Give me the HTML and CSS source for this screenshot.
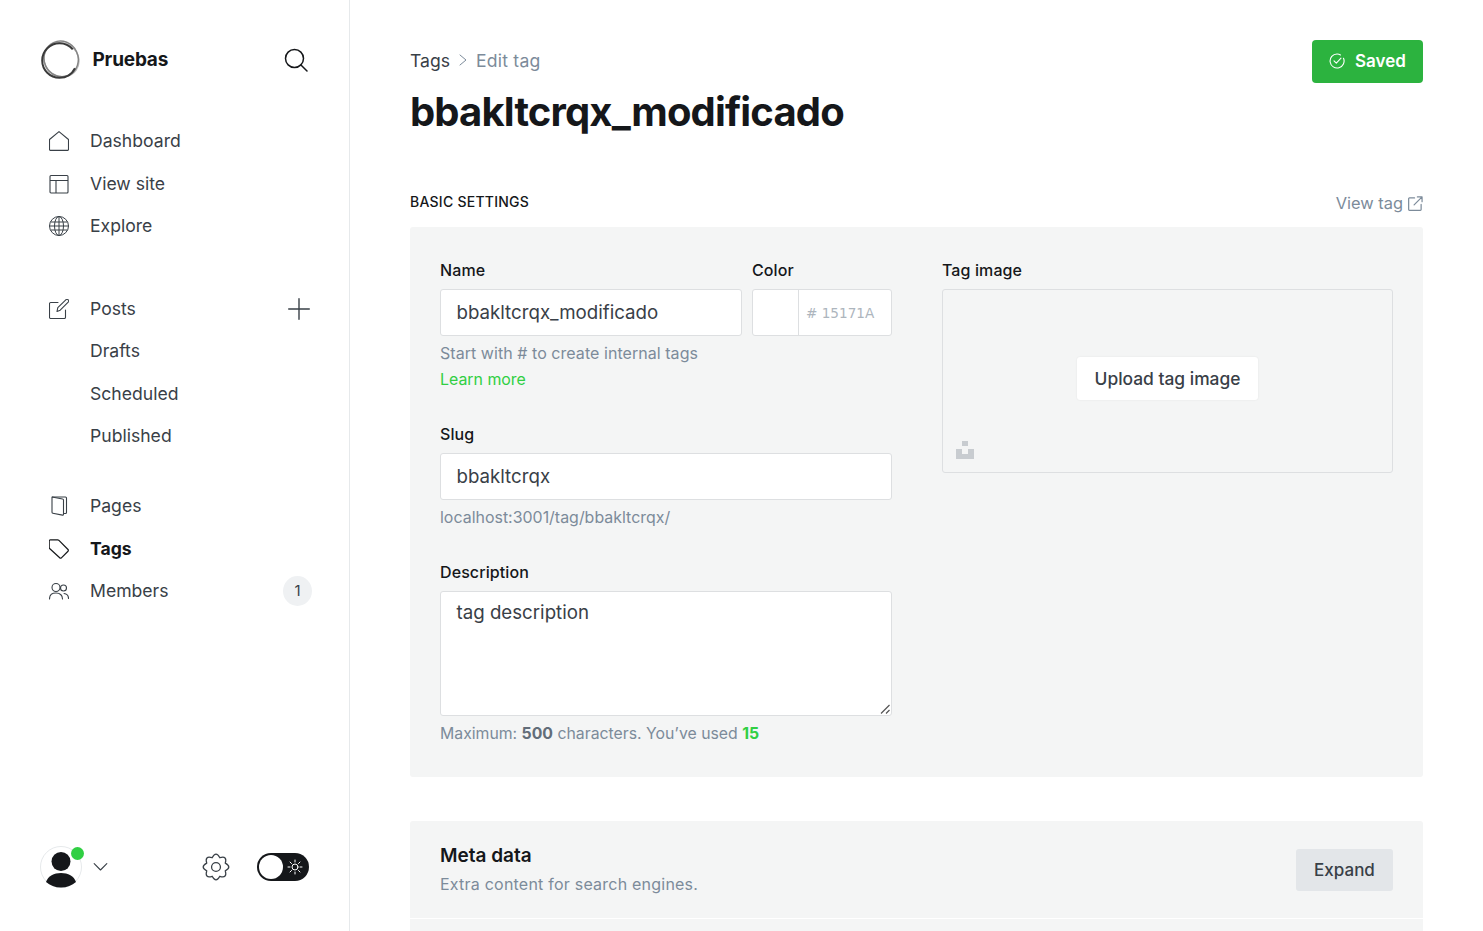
FILE: index.html
```html
<!DOCTYPE html>
<html lang="en">
<head>
    <meta charset="UTF-8">
    <meta name="viewport" content="width=device-width, initial-scale=1.0">
    <title>Tags - Edit tag</title>
    <link rel="stylesheet" href="styles.css">
</head>
<body>
    <div class="app">
        <aside class="sidebar">
            <div class="brand">
                <svg class="brand-logo" viewBox="0 0 40 40" fill="none">
                    <ellipse cx="21" cy="19" rx="18" ry="16.500" stroke="#bdbdbd" stroke-width="1.500" transform="rotate(35 20 20)"/>
                    <ellipse cx="21.500" cy="19.500" rx="17" ry="18" stroke="#858585" stroke-width="1.500" transform="rotate(-25 20 20)"/>
                    <circle cx="19.500" cy="20.500" r="17.300" stroke="#3a3a3a" stroke-width="2" stroke-dasharray="88 21" stroke-dashoffset="-8"/>
                </svg>
                <span class="brand-name">Pruebas</span>
                <svg class="brand-search" viewBox="0 0 24 24" fill="none" stroke="#15171a" stroke-width="1.500" stroke-linecap="round">
                    <circle cx="10.500" cy="10.500" r="9"/>
                    <path d="M17 17l6 6"/>
                </svg>
            </div>

            <ul class="nav nav-first">
                <li class="nav-item">
                    <svg class="nav-icon" viewBox="0 0 20 20" fill="none" stroke="#394047" stroke-width="1.100" stroke-linejoin="round"><path d="M.5 8.500L10 .6l9.500 7.900v9.700a1.200 1.200 0 01-1.200 1.200H1.700a1.200 1.200 0 01-1.200-1.200z"/></svg>
                    Dashboard
                </li>
                <li class="nav-item">
                    <svg class="nav-icon" viewBox="0 0 20 20" fill="none" stroke="#394047" stroke-width="1.100"><rect x="1" y="1.500" width="18" height="17.500" rx="1"/><path d="M1 6.500h18M7 6.500V19"/></svg>
                    View site
                </li>
                <li class="nav-item">
                    <svg class="nav-icon" viewBox="0 0 20 20" fill="none" stroke="#394047" stroke-width="1"><circle cx="10" cy="10" r="9.500"/><ellipse cx="10" cy="10" rx="4.500" ry="9.500"/><path d="M1.500 6h17M.5 10h19M1.500 14h17M10 .5v19"/></svg>
                    Explore
                </li>
            </ul>

            <ul class="nav nav-posts">
                <li class="nav-item">
                    <svg class="nav-icon" viewBox="0 0 20 20" fill="none" stroke="#394047" stroke-width="1.100" stroke-linejoin="round" stroke-linecap="round"><path d="M9 3.500H1.700A1.200 1.200 0 00.5 4.700v13.600a1.200 1.200 0 001.200 1.200h13.600a1.200 1.200 0 001.200-1.200V11"/><path d="M8 12.500l.8-3.800L16.800.8a1.600 1.600 0 012.400 2.400l-8 8z"/></svg>
                    Posts
                    <svg class="nav-plus" viewBox="0 0 22 22" fill="none" stroke="#394047" stroke-width="1.400" stroke-linecap="round"><path d="M11 .7v20.600M.7 11h20.600"/></svg>
                </li>
                <li class="nav-item">Drafts</li>
                <li class="nav-item">Scheduled</li>
                <li class="nav-item">Published</li>
            </ul>

            <ul class="nav nav-manage">
                <li class="nav-item">
                    <svg class="nav-icon" viewBox="0 0 20 20" fill="none" stroke="#394047" stroke-width="1.100" stroke-linejoin="round"><path d="M3 1h13.500a1 1 0 011 1v14.500a1 1 0 01-1 1H14.500"/><path d="M3 1l10.600 2a1 1 0 01.9 1v14.300a.8.8 0 01-1 .8L3.800 17.300a1 1 0 01-.8-1z"/></svg>
                    Pages
                </li>
                <li class="nav-item nav-item-active">
                    <svg class="nav-icon" viewBox="0 0 20 20" fill="none" stroke="#15171a" stroke-width="1.200" stroke-linejoin="round"><path d="M1.500.8h7.200a1.500 1.500 0 011 .4l9.300 9.300a1.200 1.200 0 010 1.700l-6.600 6.600a1.200 1.200 0 01-1.700 0L.6 9.500a1.500 1.500 0 01-.4-1V2a1.200 1.200 0 011.300-1.200z"/></svg>
                    Tags
                </li>
                <li class="nav-item">
                    <svg class="nav-icon" viewBox="0 0 20 20" fill="none" stroke="#394047" stroke-width="1.100" stroke-linecap="round"><circle cx="7" cy="6.500" r="4"/><path d="M.5 18c0-4 2.800-6 6.500-6s6.500 2 6.500 6"/><circle cx="14.500" cy="7" r="3"/><path d="M15 12.500c2.800.3 4.500 2 4.500 5"/></svg>
                    Members
                    <span class="nav-count">1</span>
                </li>
            </ul>

            <div class="sidebar-footer">
                <div class="avatar">
                    <svg class="avatar-pic" viewBox="0 0 42 42">
                        <circle cx="21" cy="21" r="20.500" fill="#fff" stroke="#e6e9eb"/>
                        <circle cx="21" cy="15.500" r="9.500" fill="#15171a"/>
                        <path d="M6 36c2-6 8-9 15-9s13 3 15 9c-4 3.500-9 5.500-15 5.500S10 39.500 6 36z" fill="#15171a"/>
                    </svg>
                    <span class="avatar-dot"></span>
                </div>
                <svg class="avatar-caret" viewBox="0 0 14 8" fill="none" stroke="#394047" stroke-width="1.100" stroke-linecap="round" stroke-linejoin="round"><path d="M.7.7L7 7l6.300-6.300"/></svg>
                <svg class="footer-gear" viewBox="0 0 24 24" fill="none" stroke="#394047" stroke-width="1.100" stroke-linejoin="round"><path d="M19.950 15.290Q21.900 21.900 15.290 19.950Q12 26 8.710 19.950Q2.100 21.900 4.050 15.290Q-2 12 4.050 8.710Q2.100 2.100 8.710 4.050Q12 -2 15.290 4.050Q21.900 2.100 19.950 8.710Q26 12 19.950 15.290z"/><circle cx="12" cy="12" r="3.800"/></svg>
                <div class="theme-toggle">
                    <span class="theme-knob"></span>
                    <svg class="theme-sun" viewBox="0 0 16 16" fill="none" stroke="#fff" stroke-width="1" stroke-linecap="round"><circle cx="8" cy="8" r="3"/><path d="M8 1v2M8 13v2M1 8h2M13 8h2M3 3l1.500 1.500M11.500 11.500L13 13M3 13l1.500-1.500M11.500 4.500L13 3"/></svg>
                </div>
            </div>
        </aside>

        <main class="content">
            <header class="page-head">
                <div>
                    <div class="crumbs">
                        <span class="crumb-link">Tags</span>
                        <svg class="crumb-arrow" viewBox="0 0 8 12" fill="none" stroke="#7c8b9a" stroke-width="1" stroke-linecap="round" stroke-linejoin="round"><path d="M1 1l6 5-6 5"/></svg>
                        <span class="crumb-current">Edit tag</span>
                    </div>
                    <h1>bbakltcrqx_modificado</h1>
                </div>
                <button class="btn-saved">
                    <svg viewBox="0 0 16 16" fill="none" stroke="#fff" stroke-width="1.100" stroke-linecap="round" stroke-linejoin="round"><path d="M14.500 5.200A7 7 0 118 1a7 7 0 013.500.9"/><path d="M5 7.800l2.300 2.400 4.700-5"/></svg>
                    Saved
                </button>
            </header>

            <div class="section-head">
                <h2>Basic settings</h2>
                <span class="view-tag">
                    View tag
                    <svg viewBox="0 0 16 16" fill="none" stroke="#7c8b9a" stroke-width="1.300" stroke-linecap="round" stroke-linejoin="round"><path d="M7 2H1.500a.8.8 0 00-.8.8v11.700a.8.8 0 00.8.8h11.700a.8.8 0 00.8-.8V9"/><path d="M6.500 9.500L15 1M10 1h5v5"/></svg>
                </span>
            </div>

            <section class="panel settings">
                <div class="settings-left">
                    <div class="field-row">
                        <div class="field field-name">
                            <label>Name</label>
                            <div class="input">bbakltcrqx_modificado</div>
                        </div>
                        <div class="field field-color">
                            <label>Color</label>
                            <div class="color-box">
                                <span class="color-swatch"></span>
                                <span class="color-value"># 15171A</span>
                            </div>
                        </div>
                    </div>
                    <p class="hint hint-name">Start with # to create internal tags</p>
                    <p class="hint hint-learn"><span class="green-link">Learn more</span></p>

                    <div class="field field-slug">
                        <label>Slug</label>
                        <div class="input">bbakltcrqx</div>
                    </div>
                    <p class="hint hint-url">localhost:3001/tag/bbakltcrqx/</p>

                    <div class="field field-desc">
                        <label>Description</label>
                        <div class="input textarea">
                            tag description
                            <svg class="resize-grip" viewBox="0 0 10 10" fill="none" stroke="#555" stroke-width="1.200"><path d="M1 9.500L9.500 1M6 9.500L9.500 6"/></svg>
                        </div>
                    </div>
                    <p class="hint hint-count">Maximum: <b>500</b> characters. You’ve used <b class="green">15</b></p>
                </div>

                <div class="settings-right">
                    <label>Tag image</label>
                    <div class="upload">
                        <button class="btn-upload">Upload tag image</button>
                        <svg class="unsplash" viewBox="0 0 18 18" fill="#c8ccd0"><path d="M6 0h6v5H6zM0 8h6v5h6V8h6v10H0z"/></svg>
                    </div>
                </div>
            </section>

            <section class="panel meta">
                <div class="meta-row">
                    <div>
                        <h3>Meta data</h3>
                        <p>Extra content for search engines.</p>
                    </div>
                    <button class="btn-expand">Expand</button>
                </div>
            </section>
        </main>
    </div>
</body>
</html>
```

FILE: styles.css
```css
* {
    margin: 0;
    padding: 0;
    box-sizing: border-box;
}

body {
    font-family: 'Inter', sans-serif;
    color: #15171a;
    background: #fff;
    overflow: hidden;
}

.app {
    display: flex;
    height: 100vh;
    overflow: hidden;
}

/* sidebar */
.sidebar {
    width: 350px;
    flex-shrink: 0;
    border-right: 1px solid #e6e9eb;
    display: flex;
    flex-direction: column;
    padding: 40px 37px 43px 40px;
}

.brand {
    display: flex;
    align-items: center;
    height: 40px;
}

.brand-logo {
    width: 40px;
    height: 40px;
}

.brand-name {
    font-size: 19px;
    font-weight: 700;
    margin: 0 0 2px 12.5px;
    letter-spacing: -0.2px;
}

.brand-search {
    width: 24px;
    height: 24px;
    margin-left: auto;
    margin-right: 4px;
}

.nav {
    list-style: none;
}

.nav-first {
    margin-top: 40px;
}

.nav-posts {
    margin-top: 40px;
}

.nav-manage {
    margin-top: 27.5px;
}

.nav-item {
    display: flex;
    align-items: center;
    height: 42.5px;
    padding: 0 0 1px 50px;
    position: relative;
    font-size: 17.6px;
    color: #394047;
}

.nav-item-active {
    font-weight: 700;
    color: #15171a;
}

.nav-icon {
    position: absolute;
    left: 9px;
    top: 11px;
    width: 20px;
    height: 20px;
}

.nav-plus {
    width: 22px;
    height: 22px;
    margin: 1px 2px 0 auto;
}

.nav-count {
    width: 29px;
    height: 30px;
    border-radius: 50%;
    background: #eff1f3;
    margin-left: auto;
    display: flex;
    align-items: center;
    justify-content: center;
    font-size: 15px;
    color: #394047;
}

.sidebar-footer {
    margin-top: auto;
    display: flex;
    align-items: center;
    height: 42px;
}

.avatar {
    position: relative;
    width: 42px;
    height: 42px;
}

.avatar-pic {
    width: 42px;
    height: 42px;
    display: block;
}

.avatar-dot {
    position: absolute;
    top: 1px;
    right: -2px;
    width: 13px;
    height: 13px;
    border-radius: 50%;
    background: #30cf43;
}

.avatar-caret {
    width: 15px;
    height: 8px;
    margin-left: 11px;
}

.footer-gear {
    width: 28px;
    height: 28px;
    margin-left: 94px;
}

.theme-toggle {
    width: 52px;
    height: 28px;
    margin-left: 27px;
    border-radius: 14px;
    background: #15171a;
    display: flex;
    align-items: center;
    padding: 2px;
}

.theme-knob {
    width: 24px;
    height: 24px;
    border-radius: 50%;
    background: #fff;
}

.theme-sun {
    width: 16px;
    height: 16px;
    margin-left: 4px;
}

/* main */
.content {
    flex: 1;
    padding: 40px 60px 0;
    min-width: 0;
}

.page-head {
    display: flex;
    justify-content: space-between;
    align-items: flex-start;
}

.crumbs {
    display: flex;
    align-items: center;
    height: 42px;
    padding-bottom: 2px;
    font-size: 17.6px;
}

.crumb-link {
    color: #394047;
}

.crumb-arrow {
    width: 8px;
    height: 12px;
    margin: 0 9px;
}

.crumb-current {
    color: #7c8b9a;
    letter-spacing: 0.2px;
}

h1 {
    font-size: 40px;
    font-weight: 700;
    line-height: 50px;
    letter-spacing: -0.85px;
    margin-top: 5px;
}

.btn-saved {
    display: flex;
    align-items: center;
    gap: 10px;
    width: 111px;
    height: 43px;
    padding: 0 0 2px 17px;
    border: 0;
    border-radius: 4px;
    background: #2cb33f;
    color: #fff;
    font: 600 17px 'Inter', sans-serif;
}

.btn-saved svg {
    width: 16px;
    height: 16px;
}

.section-head {
    display: flex;
    justify-content: space-between;
    align-items: flex-end;
    margin-top: 55px;
    height: 35px;
    padding-bottom: 16px;
}

h2 {
    font-size: 14px;
    font-weight: 450;
    text-transform: uppercase;
    letter-spacing: 0.25px;
    line-height: 17px;
    padding-bottom: 1px;
}

.view-tag {
    display: flex;
    align-items: center;
    gap: 5px;
    font-size: 16.4px;
    color: #7c8b9a;
    line-height: 19px;
    margin-bottom: -2px;
}

.view-tag svg {
    width: 15px;
    height: 15px;
}

.panel {
    background: #f4f5f5;
    border-radius: 3px;
}

.settings {
    display: flex;
    gap: 50px;
    padding: 30px;
    height: 550px;
}

.settings-left {
    width: 452px;
}

.settings-right {
    flex: 1;
}

label {
    display: block;
    font-size: 16px;
    font-weight: 450;
    line-height: 26px;
    height: 24px;
    margin-bottom: 8px;
    color: #15171a;
    letter-spacing: 0.1px;
}

.field-row {
    display: flex;
    gap: 10px;
}

.field-name {
    width: 302px;
}

.field-color {
    width: 140px;
}

.input {
    height: 47px;
    border: 1px solid #dddfe1;
    border-radius: 3px;
    background: #fff;
    padding: 0 15.5px 1px;
    display: flex;
    align-items: center;
    font-size: 18.7px;
    color: #394047;
}

.textarea {
    height: 125px;
    align-items: flex-start;
    padding-top: 9px;
    line-height: 24px;
    position: relative;
}

.resize-grip {
    position: absolute;
    right: 1px;
    bottom: 1px;
    width: 10px;
    height: 10px;
}

.color-box {
    display: flex;
    height: 47px;
    border: 1px solid #dddfe1;
    border-radius: 3px;
    background: #fff;
}

.color-swatch {
    width: 46px;
    border-right: 1px solid #dddfe1;
}

.color-value {
    padding-left: 7px;
    align-self: center;
    font-family: 'DejaVu Sans', sans-serif;
    font-size: 13.6px;
    color: #adb5bd;
}

.hint {
    font-size: 16px;
    line-height: 26px;
    color: #7c8b9a;
}

.hint-name {
    margin-top: 4px;
    letter-spacing: 0.05px;
}

.hint-learn {
    font-size: 15.9px;
    margin-top: 1px;
}

.hint-url {
    margin-top: 5px;
    font-size: 15.95px;
}

.green-link {
    color: #30cf43;
}

.field-slug {
    margin-top: 28px;
}

.field-desc {
    margin-top: 28px;
}

.hint-count {
    margin-top: 5px;
    font-size: 15.8px;
}

.hint b {
    font-weight: 700;
    color: #626d79;
}

.hint b.green {
    color: #30cf43;
}

.upload {
    height: 184px;
    border: 1px solid #dddfe1;
    border-radius: 3px;
    display: flex;
    align-items: center;
    justify-content: center;
    position: relative;
}

.btn-upload {
    width: 181px;
    height: 43px;
    margin-bottom: 5px;
    border: 0;
    border-radius: 3px;
    background: #fff;
    color: #394047;
    box-shadow: 0 0 2px rgba(0, 0, 0, 0.08);
    font: 500 17.4px 'Inter', sans-serif;
}

.unsplash {
    position: absolute;
    left: 13px;
    bottom: 13px;
    width: 18px;
    height: 18px;
}

.meta {
    margin-top: 44px;
    height: 200px;
}

.meta-row {
    display: flex;
    justify-content: space-between;
    align-items: center;
    height: 98px;
    padding: 0 30px;
    border-bottom: 1px solid #fff;
}

h3 {
    font-size: 19px;
    font-weight: 600;
    line-height: 26px;
}

.meta p {
    font-size: 16px;
    letter-spacing: 0.22px;
    line-height: 24px;
    margin-top: 3px;
    color: #7c8b9a;
}

.btn-expand {
    width: 97px;
    height: 42px;
    border: 0;
    border-radius: 3px;
    background: #e3e6e9;
    color: #394047;
    font: 500 17px 'Inter', sans-serif;
}
```
